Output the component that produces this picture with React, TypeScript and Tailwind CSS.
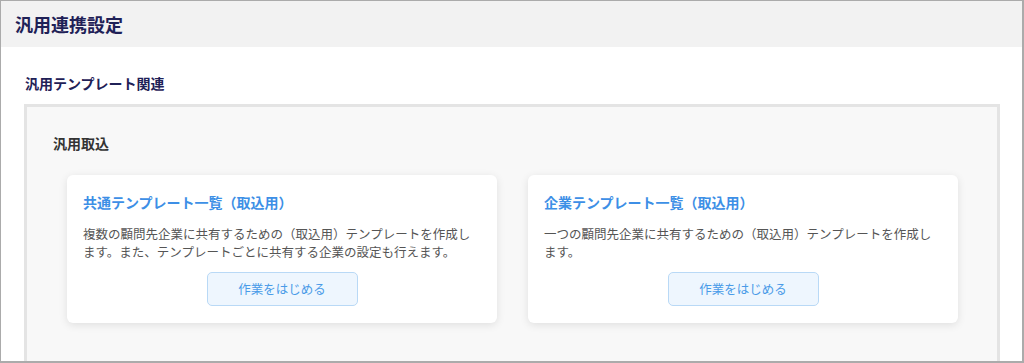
import React from "react";

const font = { fontFamily: '"Noto Sans CJK JP", "Noto Sans", sans-serif' };

function Card({ title, desc }: { title: string; desc: string }) {
  return (
    <div className="w-[430px] bg-white rounded-[6px] shadow-[0_2px_8px_rgba(0,0,0,0.10)] px-[16px] pt-[17px] pb-[17px] flex flex-col">
      <div className="text-[14px] leading-[20px] font-bold text-[#3d8fe6]">{title}</div>
      <p className="mt-[13px] text-[12.5px] leading-[18px] text-[#555555] h-[36px]">{desc}</p>
      <div className="mt-[11px] flex justify-center">
        <button className="w-[151px] h-[34px] rounded-[5px] border border-[#b9d9f6] bg-[#eef6fe] text-[12.5px] text-[#4a9be8]">
          作業をはじめる
        </button>
      </div>
    </div>
  );
}

export default function App() {
  return (
    <div
      style={font}
      className="w-[1024px] h-[363px] overflow-hidden bg-white border-l border-t border-r-2 border-b-2 border-[#ababab] flex flex-col"
    >
      <div className="h-[46px] shrink-0 bg-[#f2f2f2] flex items-center pl-[14px] text-[18px] font-bold text-[#1f2157]">
        汎用連携設定
      </div>
      <div className="mt-[26px] pl-[24px] text-[14px] leading-[20px] font-bold text-[#1f2157]">
        汎用テンプレート関連
      </div>
      <div className="mt-[11px] ml-[23px] mr-[22px] border-[3px] border-[#e4e4e4] bg-[#f8f8f8] pb-[40px]">
        <div className="pt-[26px] pl-[26px] text-[14px] leading-[20px] font-bold text-[#333333]">
          汎用取込
        </div>
        <div className="mt-[22px] pl-[40px] flex gap-[31px]">
          <Card
            title="共通テンプレート一覧（取込用）"
            desc="複数の顧問先企業に共有するための（取込用）テンプレートを作成します。また、テンプレートごとに共有する企業の設定も行えます。"
          />
          <Card
            title="企業テンプレート一覧（取込用）"
            desc="一つの顧問先企業に共有するための（取込用）テンプレートを作成します。"
          />
        </div>
      </div>
    </div>
  );
}
